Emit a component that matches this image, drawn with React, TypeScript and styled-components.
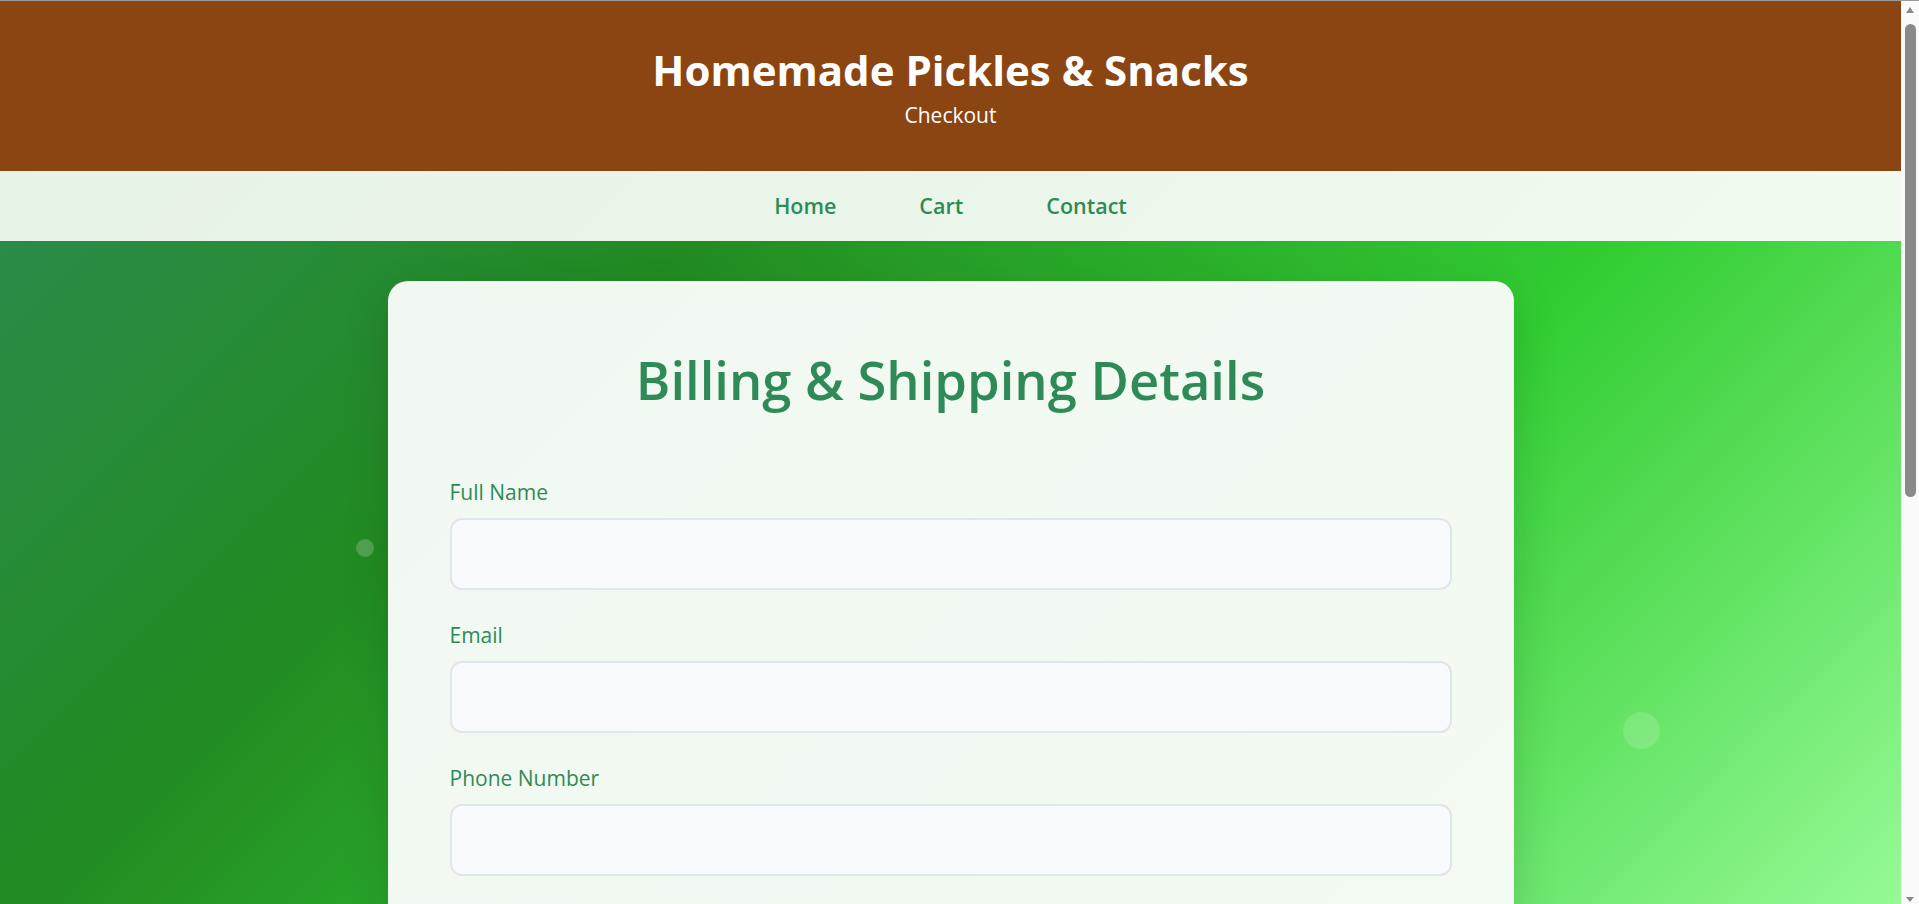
import React from "react";
import styled, { createGlobalStyle } from "styled-components";

const GlobalStyle = createGlobalStyle`
  * { box-sizing: border-box; }
  html, body { margin: 0; padding: 0; }
  body {
    font-family: "Open Sans", "Noto Sans", sans-serif;
    background: linear-gradient(135deg, #2e8b57 0%, #228b22 33%, #32cd32 66%, #98fb98 100%);
    background-attachment: fixed;
    min-height: 100vh;
    color: #2e8b57;
  }
`;

const Page = styled.div`
  margin-right: 18px;
`;

const Header = styled.header`
  background: #8b4513;
  border-top: 1px solid #9a9a9a;
  color: #ffffff;
  text-align: center;
  padding: 45px 0 42px;
`;

const Title = styled.h1`
  margin: 0;
  font-size: 42px;
  line-height: 48px;
  font-weight: 700;
`;

const Subtitle = styled.p`
  margin: 8px 0 0;
  font-size: 21px;
  line-height: 27px;
  font-weight: 400;
`;

const Nav = styled.nav`
  height: 70px;
  display: flex;
  align-items: center;
  justify-content: center;
  gap: 83px;
  background: linear-gradient(135deg, #e6f3e7 0%, #ebf6ea 50%, #f1fbef 100%);
`;

const NavLink = styled.a`
  color: #2e8b57;
  text-decoration: none;
  font-size: 21.5px;
  font-weight: 600;
  line-height: 28px;
`;

const Main = styled.main`
  position: relative;
  padding: 40px 0 40px;
  display: flex;
  justify-content: center;
`;

const Bubble = styled.span<{ $size: number; $alpha: number }>`
  position: absolute;
  width: ${(p) => p.$size}px;
  height: ${(p) => p.$size}px;
  border-radius: 50%;
  background: rgba(255, 255, 255, ${(p) => p.$alpha});
`;

const Card = styled.section`
  width: 1126px;
  background: linear-gradient(135deg, #f1f8f1 0%, #f3faf2 50%, #f4fcf2 100%);
  border-radius: 20px;
  padding: 63px 62px 64px;
  box-shadow: 0 15px 45px rgba(0, 0, 0, 0.15);
`;

const Heading = styled.h2`
  margin: 0 0 63px;
  text-align: center;
  font-size: 52.5px;
  line-height: 72px;
  font-weight: 600;
  color: #2e8b57;
`;

const Field = styled.div`
  margin-bottom: 32px;
`;

const Label = styled.label`
  display: block;
  font-size: 21px;
  line-height: 27px;
  font-weight: 500;
  color: #2e8b57;
  margin-bottom: 12px;
  padding-top: 2px;
  margin-top: -2px;
`;

const Input = styled.input`
  display: block;
  width: 100%;
  height: 72px;
  border: 2px solid #e0e6ee;
  border-radius: 12px;
  background: #f8fafc;
  padding: 0 20px;
  font-family: inherit;
  font-size: 17px;
  color: #333;
  outline: none;
`;

const TextArea = styled.textarea`
  display: block;
  width: 100%;
  height: 120px;
  border: 2px solid #e0e6ee;
  border-radius: 12px;
  background: #f8fafc;
  padding: 20px;
  font-family: inherit;
  font-size: 17px;
  resize: vertical;
  outline: none;
`;

const Row = styled.div`
  display: grid;
  grid-template-columns: 1fr 1fr;
  gap: 24px;
`;

const SubmitButton = styled.button`
  display: block;
  width: 100%;
  height: 62px;
  border: none;
  border-radius: 12px;
  background: linear-gradient(135deg, #2e8b57, #32cd32);
  color: #fff;
  font-family: inherit;
  font-size: 20px;
  font-weight: 600;
  cursor: pointer;
`;

const Footer = styled.footer`
  background: #8b4513;
  color: #fff;
  text-align: center;
  padding: 40px 0;
  font-size: 16px;
  line-height: 28px;
`;

const ScrollTrack = styled.div`
  position: fixed;
  top: 0;
  right: 0;
  bottom: 0;
  width: 18px;
  background: #fafafa;
  border-top: 1px solid #9a9a9a;
`;

const ScrollThumb = styled.div`
  position: absolute;
  top: 23px;
  left: 4px;
  width: 11px;
  height: 473px;
  border-radius: 6px;
  background: #8a8a8a;
`;

const ArrowUp = styled.div`
  position: absolute;
  top: 6px;
  left: 5px;
  width: 0;
  height: 0;
  border-left: 4.5px solid transparent;
  border-right: 4.5px solid transparent;
  border-bottom: 6px solid #8a8a8a;
`;

const ArrowDown = styled.div`
  position: absolute;
  bottom: 2px;
  left: 5px;
  width: 0;
  height: 0;
  border-left: 4.5px solid transparent;
  border-right: 4.5px solid transparent;
  border-top: 5px solid #8a8a8a;
`;

export default function App() {
  return (
    <>
      <GlobalStyle />
      <Page>
        <Header>
          <Title>Homemade Pickles &amp; Snacks</Title>
          <Subtitle>Checkout</Subtitle>
        </Header>
        <Nav>
          <NavLink href="#">Home</NavLink>
          <NavLink href="#">Cart</NavLink>
          <NavLink href="#">Contact</NavLink>
        </Nav>
        <Main>
          <Bubble $size={18} $alpha={0.2} style={{ left: 356, top: 298 }} />
          <Bubble $size={37} $alpha={0.15} style={{ left: 1623, top: 471 }} />
          <Card>
            <Heading>Billing &amp; Shipping Details</Heading>
            <form onSubmit={(e) => e.preventDefault()}>
              <Field>
                <Label htmlFor="name">Full Name</Label>
                <Input id="name" type="text" />
              </Field>
              <Field>
                <Label htmlFor="email">Email</Label>
                <Input id="email" type="email" />
              </Field>
              <Field>
                <Label htmlFor="phone">Phone Number</Label>
                <Input id="phone" type="tel" />
              </Field>
              <Field>
                <Label htmlFor="address">Address</Label>
                <TextArea id="address" />
              </Field>
              <Row>
                <Field>
                  <Label htmlFor="city">City</Label>
                  <Input id="city" type="text" />
                </Field>
                <Field>
                  <Label htmlFor="pin">PIN Code</Label>
                  <Input id="pin" type="text" />
                </Field>
              </Row>
              <SubmitButton type="submit">Place Order</SubmitButton>
            </form>
          </Card>
        </Main>
        <Footer>© 2024 Homemade Pickles &amp; Snacks. All rights reserved.</Footer>
      </Page>
      <ScrollTrack aria-hidden="true">
        <ArrowUp />
        <ScrollThumb />
        <ArrowDown />
      </ScrollTrack>
    </>
  );
}
